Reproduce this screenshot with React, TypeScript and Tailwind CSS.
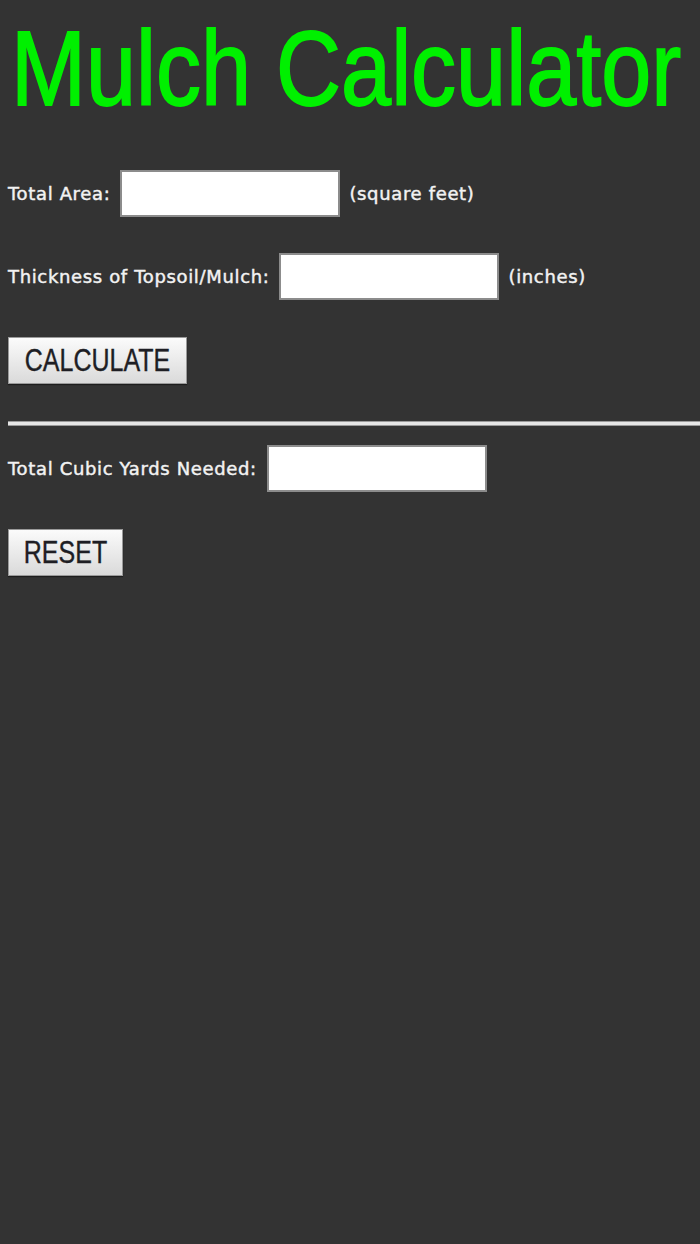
import React from "react";

function Field({ label, unit }: { label: string; unit?: string }) {
  return (
    <div className="flex items-center">
      <span className="text-[18px] tracking-[0.65px] text-[#f2f2f2] font-['DejaVu_Sans',sans-serif] leading-none [-webkit-text-stroke:0.45px_#f2f2f2]">
        {label}
      </span>
      <input
        type="text"
        className="ml-[10px] w-[220px] h-[47px] bg-white border-2 border-[#8c8c8c] outline-none"
      />
      {unit && (
        <span className="ml-[9px] text-[18px] tracking-[0.65px] text-[#f2f2f2] font-['DejaVu_Sans',sans-serif] leading-none [-webkit-text-stroke:0.45px_#f2f2f2]">
          {unit}
        </span>
      )}
    </div>
  );
}

function Btn({ children, w }: { children: React.ReactNode; w: string }) {
  return (
    <button
      className={`${w} h-[47px] flex items-center justify-center bg-gradient-to-b from-[#fbfbfb] to-[#dadada] border border-[#9a9a9a] shadow-[0_1px_1px_rgba(0,0,0,0.4)]`}
    >
      <span className="inline-block scale-y-[1.25] text-[25px] leading-none text-[#1e1e24] font-['Liberation_Sans',Arial,sans-serif] [-webkit-text-stroke:0.3px_#1e1e24]">
        {children}
      </span>
    </button>
  );
}

export default function App() {
  return (
    <div className="min-h-[1244px] w-full bg-[#333333] pl-[8px] overflow-hidden">
      <div className="pt-[16px] h-[102px]">
        <span className="inline-block origin-top scale-y-[1.17] ml-[3px] text-[90px] leading-none text-[#00f000] font-['Liberation_Sans',Arial,sans-serif] whitespace-nowrap [-webkit-text-stroke:1.5px_#00f000]">
          Mulch Calculator
        </span>
      </div>

      <div className="mt-[68px]">
        <Field label="Total Area:" unit="(square feet)" />
      </div>
      <div className="mt-[36px]">
        <Field label="Thickness of Topsoil/Mulch:" unit="(inches)" />
      </div>
      <div className="mt-[37px]">
        <Btn w="w-[179px]">CALCULATE</Btn>
      </div>

      <div className="mt-[37px] h-[5px] bg-[#e6e6e6] border-y border-[#9a9a9a]" />

      <div className="mt-[19px]">
        <Field label="Total Cubic Yards Needed:" />
      </div>
      <div className="mt-[37px]">
        <Btn w="w-[115px]">RESET</Btn>
      </div>
    </div>
  );
}
